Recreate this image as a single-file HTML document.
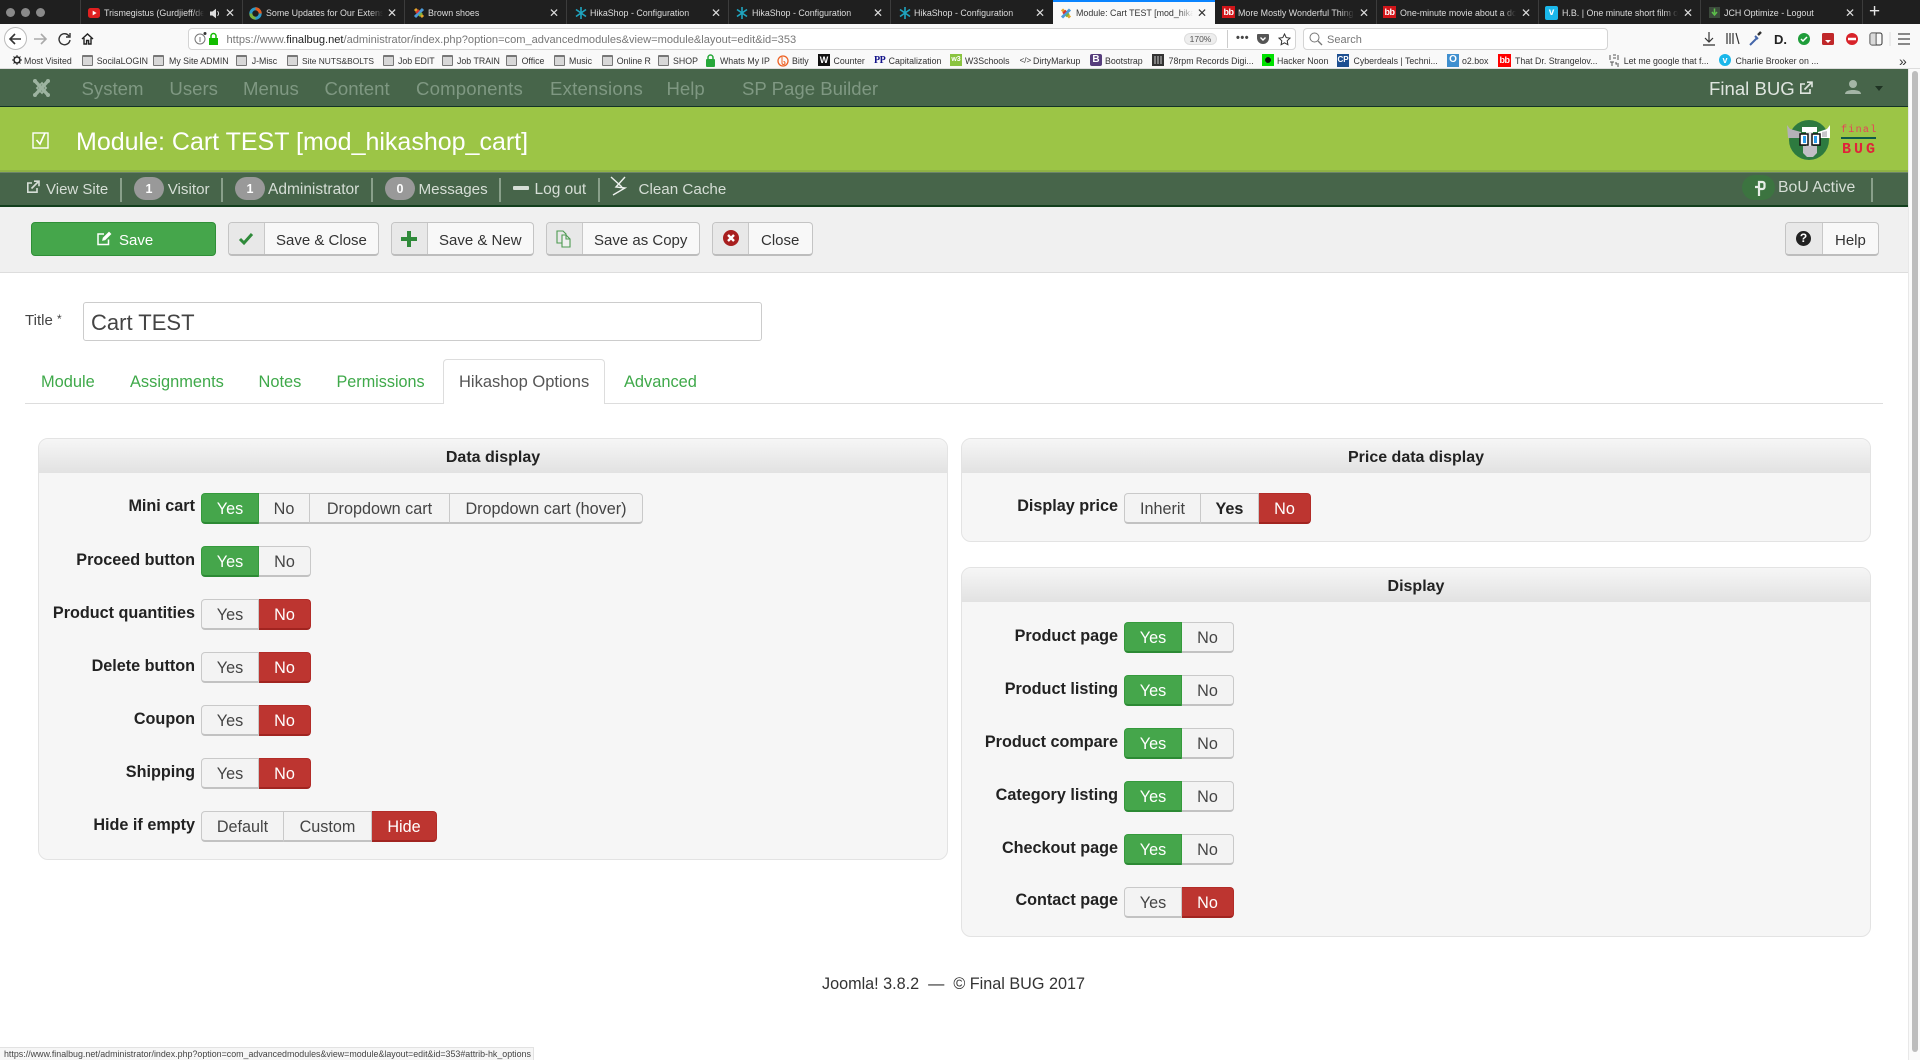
<!DOCTYPE html>
<html><head><meta charset="utf-8"><title>Module: Cart TEST</title>
<style>
html,body{margin:0;padding:0}
body{width:1920px;height:1060px;position:relative;overflow:hidden;background:#fff;font-family:"Liberation Sans",sans-serif;color:#333}
.a,.t,.b,.tb,.ic,.f,.lbl,.x{position:absolute}
.t{white-space:nowrap}
.tb{top:0;height:24px;line-height:26px;font-size:8.9px;color:#ddd;white-space:nowrap;overflow:hidden;-webkit-mask-image:linear-gradient(90deg,#000 88%,transparent)}
.sep{position:absolute;top:0;width:1px;height:24px;background:#3c3c3c}
.x{top:1px;height:24px;line-height:24px;font-size:12px;color:#ddd;width:12px;text-align:center;font-weight:400}
.bm{position:absolute;top:53px;line-height:16px;height:16px;font-size:8.8px;color:#333;white-space:nowrap}
.f{top:55px;width:9px;height:8px;background:#d8d8d8;border:1px solid #777;border-top-width:2px;border-radius:1px}
.ic{display:block}
.nv{position:absolute;top:78px;line-height:22px;font-size:18.6px;color:#7f9882;white-space:nowrap}
.s{position:absolute;top:180px;line-height:20px;font-size:15.2px;color:#d6ded6;white-space:nowrap}
.vs{position:absolute;top:178px;width:2px;height:24px;background:#89a08a}
.bd{position:absolute;top:177px;height:23px;width:30px;border-radius:12px;background:#999;color:#fff;font-weight:700;font-size:12.5px;line-height:24px;text-align:center}
.btn{position:absolute;top:222px;height:34px;box-sizing:border-box;border:1px solid #c4c4c4;border-bottom:2px solid #bdbdbd;border-radius:4px;background:#f8f8f8;font-size:15px;line-height:35px;color:#333;white-space:nowrap}
.btn i{position:absolute;left:0;top:0;bottom:0;background:#e8e8e8;border-right:1px solid #c8c8c8;border-radius:3px 0 0 3px}
.btn span{position:absolute;top:0}
.g{position:absolute;display:flex;height:31px;font-size:16.2px;line-height:30px;text-align:center;color:#444}
.g span{display:block;box-sizing:border-box;height:31px;background:#f3f3f3;border:1px solid #c9c9c9;border-bottom:2px solid #c2c2c2;border-left-width:0}
.g span:first-child{border-left-width:1px;border-radius:4px 0 0 4px}
.g span:last-child{border-radius:0 4px 4px 0}
.g .y{background:#45a64b;border-color:#359a3c;border-bottom-color:#2c8a34;color:#fff}
.g .n{background:#bd3530;border-color:#b22c28;border-bottom-color:#a12420;color:#fff}
.lbl{font-size:16.2px;font-weight:700;color:#222;text-align:right;line-height:20px;white-space:nowrap}
.l1{left:38px;width:157px}.l2{left:961px;width:157px}
.p{position:absolute;box-sizing:border-box;background:#f6f6f6;border:1px solid #e3e3e3;border-radius:10px;overflow:hidden}
.p h3{margin:0;height:34px;line-height:38px;font-size:16px;font-weight:700;text-align:center;color:#222;background:linear-gradient(#f6f6f6,#e2e2e2)}
.tab{position:absolute;top:371px;line-height:22px;font-size:16.4px;color:#3fa94a;white-space:nowrap}
</style></head><body>

<!-- tab strip -->
<div class="a" style="left:0;top:0;width:1920px;height:24px;background:#1f1f1f"></div>
<div class="a" style="left:6px;top:8px;width:9px;height:9px;border-radius:5px;background:#8a8a8a"></div>
<div class="a" style="left:21px;top:8px;width:9px;height:9px;border-radius:5px;background:#8a8a8a"></div>
<div class="a" style="left:36px;top:8px;width:9px;height:9px;border-radius:5px;background:#8a8a8a"></div>
<div class="sep" style="left:80px"></div><div class="sep" style="left:242px"></div><div class="sep" style="left:404px"></div><div class="sep" style="left:566px"></div><div class="sep" style="left:728px"></div><div class="sep" style="left:890px"></div><div class="sep" style="left:1376px"></div><div class="sep" style="left:1538px"></div><div class="sep" style="left:1700px"></div><div class="sep" style="left:1862px"></div>
<div class="a" style="left:1053px;top:0;width:162px;height:26px;background:#f9f9f9;border-top:2px solid #0a84ff;box-sizing:border-box"></div>

<svg class="ic" style="left:88px;top:8px" width="12" height="10" viewBox="0 0 12 10"><rect width="12" height="10" rx="2.5" fill="#e02020"/><path d="M4.7 2.6v4.8L8.6 5z" fill="#fff"/></svg>
<div class="tb" style="left:104px;width:100px">Trismegistus (Gurdjieff/de</div>
<svg class="ic" style="left:210px;top:8px" width="11" height="11" viewBox="0 0 11 11"><path d="M0 3.5h2.4L6 .8v9.4L2.4 7.5H0z" fill="#ddd"/><path d="M7.5 3.2a3 3 0 0 1 0 4.6" stroke="#ddd" fill="none"/></svg>
<div class="x" style="left:224px">✕</div>

<svg class="ic" style="left:249px;top:7px" width="13" height="13" viewBox="0 0 13 13"><circle cx="6.5" cy="6.5" r="4.7" fill="none" stroke="#2a9ac9" stroke-width="3"/><path d="M6.5 1.8a4.7 4.7 0 0 1 4.7 4.7" fill="none" stroke="#e25a1c" stroke-width="3"/><path d="M1.8 6.5a4.7 4.7 0 0 0 4.7 4.7" fill="none" stroke="#7bb23d" stroke-width="3"/></svg>
<div class="tb" style="left:266px;width:117px">Some Updates for Our Extensions</div>
<div class="x" style="left:386px">✕</div>

<svg class="ic" style="left:413px;top:7px" width="12" height="12" viewBox="0 0 12 12"><path d="M2 2l8 8" stroke="#e2a52b" stroke-width="3"/><path d="M10 2l-8 8" stroke="#4c9ad8" stroke-width="3"/><path d="M3 6l3-3" stroke="#d8332b" stroke-width="2"/><path d="M6 9l3-3" stroke="#7bb23d" stroke-width="2"/></svg>
<div class="tb" style="left:428px;width:110px">Brown shoes</div>
<div class="x" style="left:548px">✕</div>

<svg class="ic" style="left:575px;top:7px" width="12" height="12" viewBox="0 0 12 12"><path d="M6 0v12M1 2.5l10 7M11 2.5l-10 7" stroke="#1fa5c0" stroke-width="1.6"/></svg>
<div class="tb" style="left:590px;width:110px">HikaShop - Configuration</div>
<div class="x" style="left:710px">✕</div>

<svg class="ic" style="left:736px;top:7px" width="12" height="12" viewBox="0 0 12 12"><path d="M6 0v12M1 2.5l10 7M11 2.5l-10 7" stroke="#1fa5c0" stroke-width="1.6"/></svg>
<div class="tb" style="left:752px;width:110px">HikaShop - Configuration</div>
<div class="x" style="left:872px">✕</div>

<svg class="ic" style="left:899px;top:7px" width="12" height="12" viewBox="0 0 12 12"><path d="M6 0v12M1 2.5l10 7M11 2.5l-10 7" stroke="#1fa5c0" stroke-width="1.6"/></svg>
<div class="tb" style="left:914px;width:110px">HikaShop - Configuration</div>
<div class="x" style="left:1034px">✕</div>

<svg class="ic" style="left:1060px;top:7px" width="12" height="13" viewBox="0 0 12 12"><path d="M2 2l8 8" stroke="#e2a52b" stroke-width="3"/><path d="M10 2l-8 8" stroke="#4c9ad8" stroke-width="3"/><path d="M3 6l3-3" stroke="#d8332b" stroke-width="2"/><path d="M6 9l3-3" stroke="#7bb23d" stroke-width="2"/></svg>
<div class="tb" style="left:1076px;width:117px;color:#333">Module: Cart TEST [mod_hikashop</div>
<div class="x" style="left:1196px;color:#333">✕</div>

<div class="a" style="left:1222px;top:6px;width:13px;height:12px;background:#d2161a;color:#fff;font-size:9px;font-weight:700;line-height:12px;text-align:center;letter-spacing:-.5px">bb</div>
<div class="tb" style="left:1238px;width:116px">More Mostly Wonderful Things</div>
<div class="x" style="left:1358px">✕</div>

<div class="a" style="left:1383px;top:6px;width:13px;height:12px;background:#d2161a;color:#fff;font-size:9px;font-weight:700;line-height:12px;text-align:center;letter-spacing:-.5px">bb</div>
<div class="tb" style="left:1400px;width:116px">One-minute movie about a dog</div>
<div class="x" style="left:1520px">✕</div>

<div class="a" style="left:1545px;top:6px;width:13px;height:14px;background:#1ab7ea;border-radius:2px;color:#fff;font-size:10px;font-weight:700;line-height:13px;text-align:center">v</div>
<div class="tb" style="left:1562px;width:116px">H.B. | One minute short film on</div>
<div class="x" style="left:1682px">✕</div>

<svg class="ic" style="left:1709px;top:7px" width="11" height="11" viewBox="0 0 11 11"><rect width="11" height="11" fill="#3c4a3c"/><path d="M5.5 1.5v5M3 5l2.5 3L8 5" stroke="#5cc04a" stroke-width="1.5" fill="none"/></svg>
<div class="tb" style="left:1724px;width:110px">JCH Optimize - Logout</div>
<div class="x" style="left:1844px">✕</div>
<div class="t" style="left:1869px;top:0;line-height:24px;font-size:19px;color:#e6e6e6">+</div>

<!-- nav toolbar -->
<div class="a" style="left:0;top:24px;width:1920px;height:27px;background:#f9f9f9"></div>
<div class="a" style="left:0;top:51px;width:1920px;height:18px;background:#f9f9f9;border-bottom:1px solid #ddd;box-sizing:border-box"></div>
<div class="a" style="left:4px;top:27px;width:23px;height:23px;box-sizing:border-box;border:1px solid #bbb;border-radius:12px;background:#fff"></div>
<svg class="ic" style="left:0;top:27px" width="110" height="24" viewBox="0 0 110 24" fill="none"><path d="M21 12H10M15 7l-5 5 5 5" stroke="#333" stroke-width="1.6"/><path d="M46 12H34M41 7l5 5-5 5" stroke="#aaa" stroke-width="1.6"/><path d="M69 9a5.5 5.5 0 1 0 1 4M70 6v4h-4" stroke="#333" stroke-width="1.4"/><path d="M82 12l5.5-5 5.5 5M84 11v6h2.6v-3.5h2V17H91v-6" stroke="#222" stroke-width="1.4"/></svg>
<div class="a" style="left:188px;top:28px;width:1108px;height:22px;box-sizing:border-box;background:#fff;border:1px solid #d4d4d4;border-radius:4px"></div>
<svg class="ic" style="left:194px;top:30px" width="26" height="18" viewBox="0 0 26 18" fill="none"><circle cx="6" cy="9" r="5" stroke="#777"/><path d="M6 7v5" stroke="#777"/><circle cx="11" cy="3.500" r="1.500" fill="#333"/><rect x="15" y="8" width="9" height="7" fill="#12bc00"/><path d="M17 8V6a2.500 2.500 0 0 1 5 0v2" stroke="#12bc00" stroke-width="1.500"/></svg>
<div class="t" style="left:226.500px;top:31px;line-height:18px;font-size:11.09px;color:#777">https://www.<span style="color:#222">finalbug.net</span>/administrator/index.php?option=com_advancedmodules&amp;view=module&amp;layout=edit&amp;id=353</div>
<div class="a" style="left:1184px;top:33px;width:33px;height:12px;background:#eee;border:1px solid #ddd;box-sizing:border-box;border-radius:6px;font-size:8.500px;line-height:11px;text-align:center;color:#555">170%</div>
<div class="a" style="left:1227px;top:30px;width:1px;height:18px;background:#ccc"></div>
<div class="t" style="left:1236px;top:26px;line-height:24px;font-size:11px;font-weight:700;color:#444;letter-spacing:.5px">•••</div>
<svg class="ic" style="left:1257px;top:33px" width="12" height="12" viewBox="0 0 12 12"><path d="M1 1h10a1 1 0 0 1 1 1v3a6 6 0 0 1-12 0V2a1 1 0 0 1 1-1z" fill="#555"/><path d="M3.500 4.500L6 7l2.500-2.500" stroke="#fff" stroke-width="1.400" fill="none"/></svg>
<svg class="ic" style="left:1278px;top:33px" width="13" height="13" viewBox="0 0 13 13"><path d="M6.500 1l1.700 3.600 3.800.5-2.800 2.700.7 3.900-3.400-1.900-3.400 1.900.7-3.900L1 5.100l3.800-.5z" fill="none" stroke="#333"/></svg>
<div class="a" style="left:1303px;top:28px;width:305px;height:22px;box-sizing:border-box;background:#fff;border:1px solid #d4d4d4;border-radius:4px"></div>
<svg class="ic" style="left:1309px;top:32px" width="14" height="14" viewBox="0 0 14 14" fill="none"><circle cx="5.500" cy="5.500" r="4.500" stroke="#777"/><path d="M9 9l4 4" stroke="#777" stroke-width="1.300"/></svg>
<div class="t" style="left:1327px;top:31px;line-height:18px;font-size:11px;color:#777">Search</div>
<svg class="ic" style="left:1700px;top:30px" width="215" height="18" viewBox="0 0 215 18" fill="none"><path d="M9 2v9M5 8l4 4 4-4M3 15h12" stroke="#333" stroke-width="1.200"/><path d="M27 3v11M30 3v11M33 3v11M36 3l3 11" stroke="#333" stroke-width="1.200"/><path d="M50 15l7-7M55 6l3 3" stroke="#4466aa" stroke-width="2"/><path d="M58 5l3-3" stroke="#333" stroke-width="2.500"/><text x="74" y="14" font-family="Liberation Sans" font-size="13" font-weight="700" fill="#222">D.</text><circle cx="104" cy="9" r="6" fill="#1f9d3a"/><path d="M101 9l2 2 4-4" stroke="#fff" stroke-width="1.500"/><rect x="122" y="3" width="12" height="12" rx="1.500" fill="#c0282a"/><path d="M125 10h6l-3 3z" fill="#fff"/><circle cx="152" cy="9" r="6" fill="#d8232a"/><path d="M148 9h8" stroke="#fff" stroke-width="2.500"/><rect x="170" y="3" width="12" height="12" rx="2" stroke="#333"/><path d="M176 3v12" stroke="#333"/><rect x="170" y="3" width="6" height="12" fill="#bbb" opacity=".5"/><path d="M198 4h12M198 9h12M198 14h12" stroke="#444" stroke-width="1.300"/><path d="M190 2v14" stroke="#ddd"/></svg>

<!-- bookmarks -->
<svg class="ic" style="left:12px;top:55px" width="10" height="10" viewBox="0 0 10 10"><circle cx="5" cy="5" r="3" fill="none" stroke="#222" stroke-width="1.500"/><path d="M5 0v2M5 8v2M0 5h2M8 5h2M1.500 1.500l1.400 1.400M7.100 7.100l1.400 1.400M8.500 1.500L7.100 2.900M1.500 8.500l1.400-1.400" stroke="#222"/></svg>
<div class="bm" style="left:24px">Most Visited</div>
<div class="f" style="left:82px"></div><div class="bm" style="left:96.700px">SocilaLOGIN</div>
<div class="f" style="left:153px"></div><div class="bm" style="left:169px">My Site ADMIN</div>
<div class="f" style="left:236px"></div><div class="bm" style="left:251.700px">J-Misc</div>
<div class="f" style="left:286.500px"></div><div class="bm" style="left:302px;font-size:8.4px">Site NUTS&amp;BOLTS</div>
<div class="f" style="left:382.500px"></div><div class="bm" style="left:398px">Job EDIT</div>
<div class="f" style="left:442px"></div><div class="bm" style="left:457px">Job TRAIN</div>
<div class="f" style="left:506px"></div><div class="bm" style="left:521.600px">Office</div>
<div class="f" style="left:554px"></div><div class="bm" style="left:569px">Music</div>
<div class="f" style="left:601.600px"></div><div class="bm" style="left:616.700px">Online R</div>
<div class="f" style="left:657.500px"></div><div class="bm" style="left:673px">SHOP</div>
<svg class="ic" style="left:705px;top:54px" width="11" height="13" viewBox="0 0 11 13"><rect x="1" y="5" width="9" height="8" rx="1" fill="#27a83a"/><path d="M3 5V3.500a2.500 2.500 0 0 1 5 0V5" stroke="#27a83a" stroke-width="1.500" fill="none"/></svg>
<div class="bm" style="left:720px">Whats My IP</div>
<svg class="ic" style="left:777px;top:54px" width="12" height="13" viewBox="0 0 12 13" fill="none"><circle cx="6" cy="7" r="5" stroke="#ee6123" stroke-width="1.300"/><path d="M5 3v6a1.500 1.500 0 1 0 1.500-1.500" stroke="#ee6123"/></svg>
<div class="bm" style="left:792px">Bitly</div>
<div class="a" style="left:818px;top:54px;width:12px;height:12px;background:#111;color:#fff;font-size:9px;font-weight:700;line-height:12px;text-align:center">W</div>
<div class="bm" style="left:833.500px">Counter</div>
<div class="a" style="left:874px;top:54px;width:11px;height:11px;color:#13138a;font:700 10px/13px 'Liberation Serif',serif;letter-spacing:-.5px">PP</div>
<div class="bm" style="left:888.600px">Capitalization</div>
<div class="a" style="left:950px;top:54px;width:12px;height:12px;background:#8ac440;color:#fff;font-size:7px;font-weight:700;line-height:12px;text-align:center">w3</div>
<div class="bm" style="left:965px">W3Schools</div>
<div class="bm" style="left:1019.600px;font-size:8px">&lt;/&gt;</div>
<div class="bm" style="left:1033px">DirtyMarkup</div>
<div class="a" style="left:1090px;top:54px;width:12px;height:12px;border-radius:2px;background:#563d7c;color:#fff;font-size:10px;font-weight:700;line-height:12px;text-align:center">B</div>
<div class="bm" style="left:1105px">Bootstrap</div>
<svg class="ic" style="left:1152px;top:54px" width="12" height="12" viewBox="0 0 12 12"><rect width="12" height="12" fill="#333"/><path d="M3 2v8M6 2v8M9 2v8" stroke="#ccc"/></svg>
<div class="bm" style="left:1168.600px">78rpm Records Digi...</div>
<div class="a" style="left:1262px;top:54px;width:12px;height:12px;background:#00ff00;box-sizing:border-box;border:3px solid #00e000;"><div style="width:6px;height:6px;background:#111;border-radius:3px"></div></div>
<div class="bm" style="left:1277px">Hacker Noon</div>
<div class="a" style="left:1337px;top:54px;width:12px;height:13px;background:#1d4f91;color:#fff;font-size:8px;font-weight:700;line-height:12px;text-align:center">CP</div>
<div class="bm" style="left:1353.500px">Cyberdeals | Techni...</div>
<div class="a" style="left:1447px;top:54px;width:12px;height:13px;background:#3f8fcf;color:#fff;font-size:10px;font-weight:700;line-height:12px;text-align:center">O</div>
<div class="bm" style="left:1462px">o2.box</div>
<div class="a" style="left:1498px;top:54px;width:13px;height:13px;background:#f00;color:#fff;font-size:9px;font-weight:700;line-height:13px;text-align:center;letter-spacing:-.5px">bb</div>
<div class="bm" style="left:1515px">That Dr. Strangelov...</div>
<svg class="ic" style="left:1609px;top:54px" width="11" height="13" viewBox="0 0 11 13" fill="none" stroke="#555"><path d="M1 1v5M4 1h3M4 4h3M9 1v5M1 8h4M3 8v4M7 8v2h3M8 12h2"/></svg>
<div class="bm" style="left:1623.700px">Let me google that f...</div>
<div class="a" style="left:1719px;top:54px;width:12px;height:12px;border-radius:6px;background:#1ab7ea;color:#fff;font-size:9px;font-weight:700;line-height:12px;text-align:center">v</div>
<div class="bm" style="left:1735.500px">Charlie Brooker on ...</div>
<div class="t" style="left:1899px;top:53px;line-height:16px;font-size:14px;color:#333">»</div>

<!-- joomla nav -->
<div class="a" style="left:0;top:69px;width:1908px;height:38px;background:#47654a;border-bottom:1px solid #143226;box-sizing:border-box"></div>
<svg class="ic" style="left:31px;top:77px" width="21" height="22" viewBox="0 0 21 22" fill="none" stroke="#9db3a0" stroke-linecap="round"><path d="M4 4l13 14M17 4L4 18" stroke-width="3.400"/><path d="M6 11l5-5 4 5-4 5z" stroke-width="1.800"/><circle cx="4" cy="4" r="2" fill="#9db3a0" stroke="none"/><circle cx="17" cy="4" r="2" fill="#9db3a0" stroke="none"/><circle cx="4" cy="18" r="2" fill="#9db3a0" stroke="none"/><circle cx="17" cy="18" r="2" fill="#9db3a0" stroke="none"/></svg>
<div class="nv" style="left:81.500px">System</div>
<div class="nv" style="left:169.400px">Users</div>
<div class="nv" style="left:243px">Menus</div>
<div class="nv" style="left:324.500px">Content</div>
<div class="nv" style="left:416px;letter-spacing:.15px">Components</div>
<div class="nv" style="left:550px;letter-spacing:.2px">Extensions</div>
<div class="nv" style="left:666.500px">Help</div>
<div class="nv" style="left:742px">SP Page Builder</div>
<div class="nv" style="left:1709px;color:#dfe5df">Final BUG</div>
<svg class="ic" style="left:1799px;top:81px" width="14" height="14" viewBox="0 0 14 14" fill="none" stroke="#dfe5df" stroke-width="1.600"><path d="M11 8v4.200H1.800V3H6M5.500 8.500L12.500 1.500M8 1.200h5v5"/></svg>
<svg class="ic" style="left:1845px;top:79px" width="16" height="16" viewBox="0 0 16 16"><circle cx="8" cy="5" r="4" fill="#a4b5a6"/><path d="M0 15c0-3 4-4 8-4s8 1 8 4z" fill="#a4b5a6"/></svg>
<div class="a" style="left:1875px;top:86px;width:0;height:0;border:4.500px solid transparent;border-top:5px solid #1f3323"></div>

<!-- title band -->
<div class="a" style="left:0;top:107px;width:1908px;height:65px;background:#9cc546;border-bottom:2px solid #8fb245;box-sizing:border-box"></div>
<svg class="ic" style="left:32px;top:130px" width="18" height="20" viewBox="0 0 18 20" fill="none" stroke="#fff"><rect x="1" y="3" width="15" height="15" stroke-width="1.400"/><path d="M4.500 10l3.500 4 5-11" stroke-width="1.600"/></svg>
<div class="t" style="left:76px;top:126px;line-height:32px;font-size:25px;color:#fff">Module: Cart TEST [mod_hikashop_cart]</div>
<svg class="ic" style="left:1785px;top:118px" width="50" height="44" viewBox="0 0 50 44"><circle cx="24" cy="22" r="20" fill="#2d7a3f"/><path d="M2 7l3 4 11 3v6H3z" fill="#b4b1b8"/><path d="M45 7l-3 4-9 3v6h12z" fill="#fff"/><path d="M37 14l5-1v6h-5z" fill="#c8c6cc"/><rect x="17" y="9" width="15" height="5" fill="#fff"/><rect x="21" y="14" width="7" height="14" fill="#e6e6e6"/><rect x="15" y="16" width="8" height="11" fill="#fff" stroke="#111" stroke-width="1.500"/><rect x="27" y="16" width="8" height="11" fill="#fff" stroke="#111" stroke-width="1.500"/><rect x="18" y="18" width="3" height="7" fill="#2b9bea"/><rect x="29" y="18" width="3" height="7" fill="#2b9bea"/><path d="M18 28h14v7l-4 4h-6l-4-4z" fill="#c2bfc5"/></svg>
<div class="t" style="left:1841px;top:124px;font:10px/14px 'Liberation Mono',monospace;color:#e8405a;letter-spacing:1.300px">final</div>
<div class="a" style="left:1841px;top:137px;width:35px;height:2px;background:#0f5a4a"></div>
<div class="t" style="left:1842px;top:141px;font:15px/17px 'Liberation Mono',monospace;font-weight:700;color:#e0233a;letter-spacing:3px">BUG</div>

<!-- sub nav -->
<div class="a" style="left:0;top:172px;width:1908px;height:35px;background:#47654a;border-top:1px solid #6c8469;border-bottom:2px solid #123f1d;box-sizing:border-box"></div>
<svg class="ic" style="left:26px;top:180px" width="14" height="14" viewBox="0 0 14 14" fill="none" stroke="#d6ded6" stroke-width="1.600"><path d="M11 8v4.200H1.800V3H6M5.500 8.500L12.500 1.500M8 1.200h5v5"/></svg>
<div class="s" style="left:46px;font-size:15px">View Site</div><div class="vs" style="left:120px"></div>
<div class="bd" style="left:134px">1</div><div class="s" style="left:167.700px">Visitor</div><div class="vs" style="left:221px"></div>
<div class="bd" style="left:235px">1</div><div class="s" style="left:268px;font-size:15.5px">Administrator</div><div class="vs" style="left:371px"></div>
<div class="bd" style="left:385px">0</div><div class="s" style="left:418.500px">Messages</div><div class="vs" style="left:499px"></div>
<div class="a" style="left:513px;top:186px;width:16px;height:4px;background:#d6ded6;border-radius:1px"></div>
<div class="s" style="left:534.500px;font-size:15.5px">Log out</div><div class="vs" style="left:598px"></div>
<svg class="ic" style="left:610px;top:176px" width="21" height="20" viewBox="0 0 21 20" fill="none" stroke="#eef2ee" stroke-width="1.400"><path d="M1 1l11 10"/><path d="M15 1L6 11l9 1-12 7"/></svg>
<div class="s" style="left:638.500px">Clean Cache</div>
<div class="a" style="left:1742px;top:175px;width:33px;height:25px;border-radius:13px;background:#3c7440"></div>
<svg class="ic" style="left:1752px;top:179px" width="14" height="18" viewBox="0 0 14 18" fill="none" stroke="#e6ede6" stroke-width="2.200"><path d="M7 17V3h3.500a2 2 0 0 1 2 2v3a2 2 0 0 1-2 2H7M7 8H3"/></svg>
<div class="s" style="left:1778px;top:178px;font-size:15.800px">BoU Active</div>
<div class="vs" style="left:1871px"></div>

<!-- toolbar band -->
<div class="a" style="left:0;top:207px;width:1908px;height:66px;background:#f0f0f0;border-bottom:1px solid #ddd;box-sizing:border-box"></div>
<div class="a" style="left:31px;top:222px;width:185px;height:34px;box-sizing:border-box;background:#45a64b;border:1px solid #2f8f37;border-radius:4px"></div>
<svg class="ic" style="left:97px;top:231px" width="15" height="15" viewBox="0 0 15 15" fill="none" stroke="#fff" stroke-width="1.500"><path d="M11.500 8.500V13.500H1V3H7"/><path d="M5.500 9.500l.6-2.600L12 1l2 2-5.900 5.900z" fill="#fff" stroke-width=".6"/></svg>
<div class="t" style="left:119px;top:230px;line-height:21px;font-size:15px;color:#fff">Save</div>

<div class="btn" style="left:228px;width:151px"><i style="width:35px"></i><span style="left:47px">Save &amp; Close</span></div>
<svg class="ic" style="left:238px;top:232px" width="16" height="14" viewBox="0 0 16 14" fill="none" stroke="#2f8a3a" stroke-width="3"><path d="M2 7l4 4 8-9"/></svg>
<div class="btn" style="left:391px;width:143px"><i style="width:35px"></i><span style="left:47px">Save &amp; New</span></div>
<svg class="ic" style="left:401px;top:231px" width="16" height="16" viewBox="0 0 16 16" fill="#2f8a3a"><path d="M6 0h4v6h6v4h-6v6H6v-6H0V6h6z"/></svg>
<div class="btn" style="left:546px;width:154px"><i style="width:35px"></i><span style="left:47px">Save as Copy</span></div>
<svg class="ic" style="left:556px;top:230px" width="15" height="18" viewBox="0 0 15 18" fill="none" stroke="#4c9a50" stroke-width="1.100"><path d="M1 1h6l3 3v9H1z"/><path d="M6 5h4l4 4v8H6z" fill="#f0f0f0"/><path d="M10 5v4h4"/></svg>
<div class="btn" style="left:712px;width:101px"><i style="width:35px"></i><span style="left:48px">Close</span></div>
<svg class="ic" style="left:723px;top:230px" width="16" height="16" viewBox="0 0 16 16"><circle cx="8" cy="8" r="8" fill="#a81f1f"/><path d="M5 5l6 6M11 5l-6 6" stroke="#fff" stroke-width="2.400"/></svg>
<div class="btn" style="left:1785px;width:94px"><i style="width:36px"></i><span style="left:49px">Help</span></div>
<div class="a" style="left:1796px;top:231px;width:15px;height:15px;border-radius:8px;background:#222;color:#fff;font-size:12px;font-weight:700;line-height:15px;text-align:center">?</div>

<!-- title -->
<div class="t" style="left:25px;top:309px;line-height:20px;font-size:15px;color:#444">Title <span style="font-size:12px;vertical-align:2px">*</span></div>
<div class="a" style="left:83px;top:302px;width:679px;height:39px;box-sizing:border-box;background:#fff;border:1px solid #ccc;border-radius:3px"></div>
<div class="t" style="left:91px;top:309px;line-height:28px;font-size:22px;color:#444">Cart TEST</div>

<!-- tabs -->
<div class="a" style="left:25px;top:403px;width:1858px;height:1px;background:#ddd"></div>
<div class="a" style="left:443px;top:359px;width:162px;height:45px;box-sizing:border-box;background:#fff;border:1px solid #ddd;border-bottom:0;border-radius:4px 4px 0 0"></div>
<div class="tab" style="left:41px">Module</div>
<div class="tab" style="left:130px">Assignments</div>
<div class="tab" style="left:258.500px">Notes</div>
<div class="tab" style="left:336.500px;font-size:16.2px">Permissions</div>
<div class="tab" style="left:459px;color:#555;font-size:16.5px">Hikashop Options</div>
<div class="tab" style="left:624px">Advanced</div>

<!-- panels -->
<div class="p" style="left:38px;top:438px;width:910px;height:422px"><h3>Data display</h3></div>
<div class="p" style="left:961px;top:438px;width:910px;height:104px"><h3>Price data display</h3></div>
<div class="p" style="left:961px;top:567px;width:910px;height:370px"><h3>Display</h3></div>

<!-- left rows -->
<div class="lbl l1" style="top:496px">Mini cart</div>
<div class="g" style="left:201px;top:493px"><span class="y" style="width:58px">Yes</span><span style="width:51px">No</span><span style="width:140px">Dropdown cart</span><span style="width:193px">Dropdown cart (hover)</span></div>
<div class="lbl l1" style="top:550px">Proceed button</div>
<div class="g" style="left:201px;top:546px"><span class="y" style="width:58px">Yes</span><span style="width:52px">No</span></div>
<div class="lbl l1" style="top:603px">Product quantities</div>
<div class="g" style="left:201px;top:599px"><span style="width:58px">Yes</span><span class="n" style="width:52px">No</span></div>
<div class="lbl l1" style="top:656px">Delete button</div>
<div class="g" style="left:201px;top:652px"><span style="width:58px">Yes</span><span class="n" style="width:52px">No</span></div>
<div class="lbl l1" style="top:709px">Coupon</div>
<div class="g" style="left:201px;top:705px"><span style="width:58px">Yes</span><span class="n" style="width:52px">No</span></div>
<div class="lbl l1" style="top:762px">Shipping</div>
<div class="g" style="left:201px;top:758px"><span style="width:58px">Yes</span><span class="n" style="width:52px">No</span></div>
<div class="lbl l1" style="top:815px">Hide if empty</div>
<div class="g" style="left:201px;top:811px"><span style="width:83px">Default</span><span style="width:88px">Custom</span><span class="n" style="width:65px">Hide</span></div>

<!-- right rows -->
<div class="lbl l2" style="top:496px">Display price</div>
<div class="g" style="left:1124px;top:493px"><span style="width:77px">Inherit</span><span style="width:58px;color:#222;font-weight:700">Yes</span><span class="n" style="width:52px">No</span></div>
<div class="lbl l2" style="top:626px">Product page</div>
<div class="g" style="left:1124px;top:622px"><span class="y" style="width:58px">Yes</span><span style="width:52px">No</span></div>
<div class="lbl l2" style="top:679px">Product listing</div>
<div class="g" style="left:1124px;top:675px"><span class="y" style="width:58px">Yes</span><span style="width:52px">No</span></div>
<div class="lbl l2" style="top:732px">Product compare</div>
<div class="g" style="left:1124px;top:728px"><span class="y" style="width:58px">Yes</span><span style="width:52px">No</span></div>
<div class="lbl l2" style="top:785px">Category listing</div>
<div class="g" style="left:1124px;top:781px"><span class="y" style="width:58px">Yes</span><span style="width:52px">No</span></div>
<div class="lbl l2" style="top:838px">Checkout page</div>
<div class="g" style="left:1124px;top:834px"><span class="y" style="width:58px">Yes</span><span style="width:52px">No</span></div>
<div class="lbl l2" style="top:890px">Contact page</div>
<div class="g" style="left:1124px;top:887px"><span style="width:58px">Yes</span><span class="n" style="width:52px">No</span></div>

<!-- footer -->
<div class="t" style="left:822px;top:974px;line-height:20px;font-size:16.2px;color:#333">Joomla! 3.8.2 &nbsp;—&nbsp; © Final BUG 2017</div>

<!-- status -->
<div class="a" style="left:0;top:1047px;width:534px;height:13px;box-sizing:border-box;background:#f6f6f6;border:1px solid #e2e2e2;border-left:0;border-bottom:0"></div>
<div class="t" style="left:4px;top:1048px;line-height:12px;font-size:8.880px;color:#444">https://www.finalbug.net/administrator/index.php?option=com_advancedmodules&amp;view=module&amp;layout=edit&amp;id=353#attrib-hk_options</div>

<!-- scrollbar -->
<div class="a" style="left:1908px;top:69px;width:12px;height:991px;background:#fafafa;border-left:1px solid #e8e8e8;box-sizing:border-box"></div>
<div class="a" style="left:1912px;top:71px;width:6px;height:981px;background:#bdbdbd;border-radius:3px"></div>
</body></html>
